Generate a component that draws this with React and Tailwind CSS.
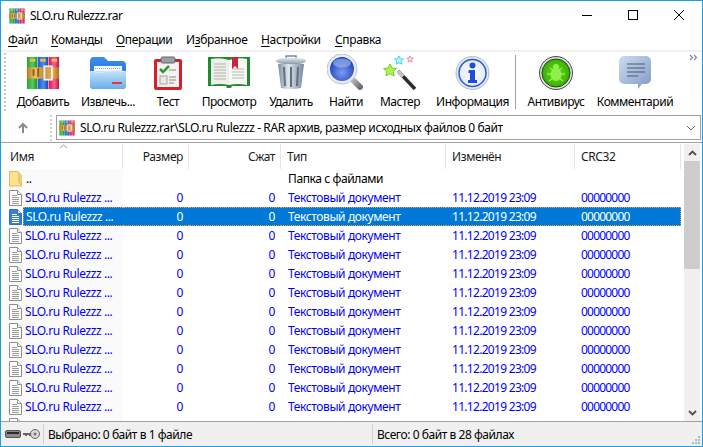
import React from "react";

const font = { fontFamily: '"Noto Sans", "Open Sans", sans-serif' };

function Rar({ size = 16 }) {
  return (
    <svg width={size} height={size} viewBox="0 0 34 36" className="shrink-0">
      <defs>
        <linearGradient id="rg" x1="0" x2="1" y1="0" y2="0"><stop offset="0" stopColor="#2aa03c" /><stop offset="0.55" stopColor="#56cc58" /><stop offset="1" stopColor="#1f8a30" /></linearGradient>
        <linearGradient id="rb" x1="0" x2="1" y1="0" y2="0"><stop offset="0" stopColor="#2358d0" /><stop offset="0.55" stopColor="#4a8cf0" /><stop offset="1" stopColor="#1c48b0" /></linearGradient>
        <linearGradient id="rr" x1="0" x2="1" y1="0" y2="0"><stop offset="0" stopColor="#d8184a" /><stop offset="0.55" stopColor="#f8608a" /><stop offset="1" stopColor="#c01040" /></linearGradient>
        <linearGradient id="rbelt" x1="0" x2="1" y1="0" y2="0"><stop offset="0" stopColor="#b87a24" /><stop offset="0.25" stopColor="#f0c060" /><stop offset="0.5" stopColor="#c89038" /><stop offset="0.8" stopColor="#e8b050" /><stop offset="1" stopColor="#b07020" /></linearGradient>
      </defs>
      <rect x="0" y="1" width="11" height="34" fill="url(#rg)" />
      <rect x="11.500" y="1" width="11" height="34" fill="url(#rb)" />
      <rect x="23" y="1" width="11" height="34" fill="url(#rr)" />
      <rect x="3" y="3" width="6" height="3" fill="#e0c050" />
      <rect x="14" y="3" width="6" height="3" fill="#e0c050" />
      <rect x="26" y="3" width="6" height="3" fill="#e0c050" />
      <rect x="0" y="12" width="34" height="12" fill="url(#rbelt)" />
      <rect x="18.500" y="11" width="8" height="14" fill="none" stroke="#f0f0f0" strokeWidth="2" />
      <rect x="6" y="14" width="2" height="7" fill="#8a5c18" />
      <rect x="11" y="13" width="2" height="9" fill="#8a5c18" />
    </svg>
  );
}

function Extract() {
  return (
    <svg width="36" height="34" viewBox="0 0 36 34">
      <defs>
        <linearGradient id="ex1" x1="0" x2="0" y1="0" y2="1"><stop offset="0" stopColor="#3a8ef0" /><stop offset="1" stopColor="#1c5fc8" /></linearGradient>
        <linearGradient id="ex2" x1="0" x2="0" y1="0" y2="1"><stop offset="0" stopColor="#c4e2fa" /><stop offset="1" stopColor="#68aeee" /></linearGradient>
      </defs>
      <path d="M0 5a4 4 0 0 1 4-4h10l4 4h14a4 4 0 0 1 4 4v20a4 4 0 0 1-4 4H4a4 4 0 0 1-4-4z" fill="url(#ex1)" />
      <rect x="4" y="10" width="28" height="9" fill="#f4f6f8" />
      <path d="M5 12.500h26" stroke="#9aa4b0" strokeDasharray="1 1" />
      <path d="M0 15h36v14a4 4 0 0 1-4 4H4a4 4 0 0 1-4-4z" fill="url(#ex2)" />
      <path d="M1 15.500q8 2 17 0t17 0" fill="none" stroke="#d8ecfc" />
      <rect x="22" y="26" width="10" height="2" fill="#e03a3a" />
    </svg>
  );
}

function Test() {
  return (
    <svg width="28" height="34" viewBox="0 0 28 34">
      <rect x="0" y="3" width="28" height="31" rx="2" fill="#d81e2c" />
      <rect x="3" y="6" width="22" height="25" fill="#f5f3ee" />
      <rect x="7" y="1" width="14" height="6" rx="1.500" fill="#9aa0a6" stroke="#5f656b" />
      <path d="M6 13l3 3 6-6" fill="none" stroke="#2d9a3c" strokeWidth="2.500" />
      <rect x="6" y="20" width="7" height="8" fill="#eceae4" stroke="#a5a5a5" />
      <path d="M15 14h7M15 21h7M15 24h7M15 27h5" stroke="#8c8c8c" />
    </svg>
  );
}

function Book() {
  return (
    <svg width="42" height="33" viewBox="0 0 42 33">
      <path d="M0 1h42v29H24l-1 2h-4l-1-2H0z" fill="#1f8a2e" />
      <path d="M3 3q9-2 18 1v25q-9-2-18 0z" fill="#eeeeea" />
      <path d="M39 3q-9-2-18 1v25q9-2 18 0z" fill="#f8f8f5" />
      <path d="M6 8h12M6 11h12M6 14h12M6 17h12M6 20h12M6 23h12M24 13h12M24 16h12M24 19h12M24 22h12" stroke="#b5b5b0" />
      <path d="M24 1h6v12l-3-3-3 3z" fill="#c8243c" />
    </svg>
  );
}

function Trash() {
  return (
    <svg width="30" height="35" viewBox="0 0 30 35">
      <defs>
        <linearGradient id="tr" x1="0" x2="1" y1="0" y2="0"><stop offset="0" stopColor="#7d8ea3" /><stop offset="0.4" stopColor="#dfe5ec" /><stop offset="1" stopColor="#77889e" /></linearGradient>
        <linearGradient id="tr2" x1="0" x2="0" y1="0" y2="1"><stop offset="0" stopColor="#e8edf2" /><stop offset="1" stopColor="#8495a8" /></linearGradient>
      </defs>
      <path d="M10 3V1h10v2" fill="none" stroke="#7a8a9c" strokeWidth="1.500" />
      <ellipse cx="15" cy="6" rx="15" ry="3.500" fill="url(#tr2)" />
      <path d="M2 9h26l-3 24q-10 2-20 0z" fill="url(#tr)" />
      <path d="M8 12l1 19M15 12v20M22 12l-1 19" stroke="#5f7085" strokeWidth="2" />
    </svg>
  );
}

function Find() {
  return (
    <svg width="38" height="37" viewBox="0 0 38 37">
      <defs>
        <radialGradient id="fd" cx="0.5" cy="0.65" r="0.6"><stop offset="0" stopColor="#7f9cf0" /><stop offset="1" stopColor="#1e40b8" /></radialGradient>
        <linearGradient id="fh" x1="0" x2="1" y1="0" y2="1"><stop offset="0" stopColor="#c8ccd0" /><stop offset="1" stopColor="#6b6f75" /></linearGradient>
      </defs>
      <path d="M24 24l9 9" stroke="url(#fh)" strokeWidth="6" strokeLinecap="round" />
      <circle cx="15" cy="15" r="15" fill="#e8eef6" stroke="#b9c4d2" />
      <circle cx="15" cy="15" r="12" fill="url(#fd)" />
      <ellipse cx="15" cy="9" rx="9" ry="4.500" fill="#a9c0f4" opacity="0.6" />
    </svg>
  );
}

function Wizard() {
  return (
    <svg width="36" height="34" viewBox="0 0 36 34">
      <path d="M16 15l17 18" stroke="#2c2c2c" strokeWidth="3.500" />
      <path d="M16 15l5 5.500" stroke="#c4c4c4" strokeWidth="3.500" />
      <path d="M8 8l2 4 4.500.5-3.300 3 1 4.500L8 17.800 3.800 20l1-4.500-3.300-3 4.500-.5z" fill="#b4f04c" stroke="#6fd03a" />
      <path d="M17 0l1.500 2.800 3 .3-2.200 2.100.7 3-3-1.500-2.800 1.500.6-3L12.500 3l3-.3z" fill="#b8f2fb" stroke="#3fd0ee" />
      <path d="M28 0l1 2 2.200.2-1.600 1.500.5 2.200-2.100-1.100-2 1.100.4-2.200L24.800 2.200 27 2z" fill="#fde0e6" stroke="#f08aa4" />
    </svg>
  );
}

function Info() {
  return (
    <svg width="35" height="34" viewBox="0 0 35 34">
      <defs><radialGradient id="inf" cx="0.5" cy="0.5" r="0.55"><stop offset="0" stopColor="#ffffff" /><stop offset="1" stopColor="#dfe7f6" /></radialGradient></defs>
      <circle cx="17.500" cy="17" r="16.500" fill="#e3e6ea" stroke="#b5bcc6" />
      <circle cx="17.500" cy="17" r="13.500" fill="url(#inf)" stroke="#2c5cc8" strokeWidth="1.500" />
      <circle cx="17.500" cy="9.500" r="3" fill="#1d4ed8" />
      <path d="M13.500 14h6.500v10h2v3h-9v-3h2v-7h-1.500z" fill="#1d4ed8" />
    </svg>
  );
}

function Bug() {
  return (
    <svg width="34" height="34" viewBox="0 0 34 34">
      <defs><radialGradient id="bg1" cx="0.5" cy="0.5" r="0.55"><stop offset="0" stopColor="#5ee01a" /><stop offset="1" stopColor="#3aa808" /></radialGradient></defs>
      <circle cx="17" cy="17" r="16.500" fill="#dcdcdc" stroke="#4a4a4a" />
      <circle cx="17" cy="17" r="14" fill="url(#bg1)" stroke="#1a4a08" />
      <ellipse cx="17" cy="18.500" rx="5.500" ry="6.500" fill="#8ff04a" />
      <circle cx="17" cy="11" r="3" fill="#8ff04a" />
      <path d="M11 12l4 3M23 12l-4 3M8 18h5M26 18h-5M10 25l4-3M24 25l-4-3" stroke="#8ff04a" strokeWidth="1.300" />
    </svg>
  );
}

function Comment() {
  return (
    <svg width="32" height="33" viewBox="0 0 32 33">
      <defs><linearGradient id="cm" x1="0" x2="1" y1="0" y2="1"><stop offset="0" stopColor="#cddcf0" /><stop offset="1" stopColor="#7f9ac4" /></linearGradient></defs>
      <path d="M5 0h22a5 5 0 0 1 5 5v18a5 5 0 0 1-5 5h-4l-4 5v-5H5a5 5 0 0 1-5-5V5a5 5 0 0 1 5-5z" fill="url(#cm)" />
      <path d="M8 8h18M8 12h18M8 16h18M8 20h11" stroke="#4a5a72" strokeWidth="1.200" />
    </svg>
  );
}

function FileIcon({ selected }) {
  const c = selected ? "#2f6fc8" : "#8e8e8e";
  return (
    <svg width="13" height="16" viewBox="0 0 13 16" className="shrink-0">
      <path d="M.5.500h8l4 4v11H.5z" fill={selected ? "#3a7fd6" : "#ffffff"} stroke={c} />
      <path d="M8.500.500v4h4" fill="#f0f0f0" stroke={c} />
      <path d="M3 5.500h5M3 7.500h7M3 9.500h7M3 11.500h7M3 13.500h7" stroke={selected ? "#ffffff" : "#9a9a9a"} />
    </svg>
  );
}

function FolderIcon() {
  return (
    <svg width="13" height="16" viewBox="0 0 13 16" className="shrink-0">
      <path d="M.5.500h8l1.500 1v9.500H12.500v4H.5z" fill="#fbe38e" stroke="#d8bb5c" />
      <path d="M10 11V2l2.500 2v11z" fill="#f3cf6a" stroke="#d8bb5c" strokeWidth="0.600" />
    </svg>
  );
}

const tools = [
  ["Добавить", "w-[68px]", <Rar size={34} />],
  ["Извлечь...", "w-[62px]", <Extract />],
  ["Тест", "w-[58px]", <Test />],
  ["Просмотр", "w-[64px]", <Book />],
  ["Удалить", "w-[60px]", <Trash />],
  ["Найти", "w-[50px]", <Find />],
  ["Мастер", "w-[58px]", <Wizard />],
  ["Информация", "w-[87px]", <Info />],
];
const tools2 = [
  ["Антивирус", "w-[80px]", <Bug />],
  ["Комментарий", "w-[78px]", <Comment />],
];

function Tool({ label, w, icon }) {
  return (
    <div className={`${w} h-[59px] shrink-0 flex flex-col items-center pt-[2px]`}>
      <div className="h-[37px] flex items-center justify-center">{icon}</div>
      <div className="mt-[2px] text-[12px] leading-[18px] whitespace-nowrap tracking-[-0.45px] text-black">{label}</div>
    </div>
  );
}

const grid = "grid grid-cols-[118px_66px_92px_165px_129px_106px]";

function Row({ selected }) {
  const t = selected ? "text-white" : "text-[#0000ff]";
  return (
    <div className={`${grid} h-[19px] text-[12px] leading-[19px] tracking-[-0.4px] whitespace-nowrap ${t}`}>
      <div className={`flex items-center pl-[4px] ${selected ? "" : "bg-[#fafafa]"}`}>
        <FileIcon selected={selected} />
        <div className={`ml-[1px] pl-[2px] flex-1 h-[19px] ${selected ? "bg-[#0078d7] border-y border-l border-dotted border-[#f0a030] leading-[17px]" : ""}`}>SLO.ru Rulezzz ...</div>
      </div>
      {[
        <div className="text-right pr-[6px]">0</div>,
        <div className="text-right pr-[6px]">0</div>,
        <div className="pl-[7px]">Текстовый документ</div>,
        <div className="pl-[6px] tracking-[-0.7px]">11.12.2019 23:09</div>,
        <div className="pl-[6px] tracking-[-0.8px]">00000000</div>,
      ].map((c, i) => (
        <div key={i} className={selected ? `bg-[#0078d7] border-y border-dotted border-[#f0a030] leading-[17px] ${i === 4 ? "border-r" : ""}` : ""}>{c}</div>
      ))}
    </div>
  );
}

function Head({ label, right, first }) {
  return (
    <div className={`h-[25px] border-r border-[#e5e5e5] text-[12px] leading-[25px] tracking-[-0.4px] text-[#1a1a1a] ${right ? "text-right pr-[5px]" : first ? "pl-[5px]" : "pl-[6px]"}`}>{label}</div>
  );
}

const U = ({ children }) => <span className="underline underline-offset-2">{children}</span>;

export default function App() {
  return (
    <div style={font} className="w-[703px] h-[447px] bg-white border border-[#18a0e8] flex flex-col overflow-hidden text-black">
      {/* Title */}
      <div className="h-[29px] shrink-0 flex items-center pl-[8px] bg-white">
        <Rar size={16} />
        <div className="ml-[5px] text-[12px] tracking-[-0.5px]">SLO.ru Rulezzz.rar</div>
        <div className="ml-auto flex items-center">
          <svg width="46" height="29" viewBox="0 0 46 29"><path d="M18 14.500h10" stroke="#000" /></svg>
          <svg width="46" height="29" viewBox="0 0 46 29"><rect x="18.500" y="9.500" width="9" height="9" fill="none" stroke="#000" /></svg>
          <svg width="46" height="29" viewBox="0 0 46 29"><path d="M18 9l10 10M28 9L18 19" stroke="#000" /></svg>
        </div>
      </div>
      {/* Menu */}
      <div className="h-[20px] shrink-0 flex items-center pl-[7px] gap-[13px] text-[12px] tracking-[-0.35px] whitespace-nowrap">
        <div className="w-[30px]"><U>Ф</U>айл</div>
        <div className="w-[52px]"><U>К</U>оманды</div>
        <div className="w-[57px]"><U>О</U>перации</div>
        <div className="w-[62px]">И<U>з</U>бранное</div>
        <div className="w-[61px]"><U>Н</U>астройки</div>
        <div><U>С</U>правка</div>
      </div>
      {/* Toolbar */}
      <div className="h-[63px] shrink-0 border-t-2 border-[#f0f0f0] flex items-start pl-[3px] relative">
        <div className="w-[2px] h-[58px] mt-[1px] border-l-2 border-dotted border-[#c8c8c8] shrink-0" />
        <div className="w-[3px] shrink-0" />
        {tools.map(([l, w, i]) => <Tool key={l} label={l} w={w} icon={i} />)}
        <div className="w-px h-[54px] mt-[3px] bg-[#a0a0a0] shrink-0 -ml-[1px]" />
        {tools2.map(([l, w, i]) => <Tool key={l} label={l} w={w} icon={i} />)}
        <svg className="absolute right-[4px] top-[2px]" width="9" height="7" viewBox="0 0 9 7">
          <path d="M1 1l2.500 2.500L1 6M5 1l2.500 2.500L5 6" fill="none" stroke="#7a8ba5" strokeWidth="1.200" />
        </svg>
      </div>
      {/* Address */}
      <div className="h-[30px] shrink-0 flex items-center pl-[4px] pr-[1px] bg-white border-b border-[#a0a0a0]">
        <div className="w-[36px] flex justify-center shrink-0">
          <svg width="12" height="12" viewBox="0 0 12 12"><path d="M6 11V2M2 6l4-4 4 4" fill="none" stroke="#8a8a8a" strokeWidth="2" /></svg>
        </div>
        <div className="ml-[9px] w-[2px] h-[26px] border-l-2 border-dotted border-[#d0d0d0] shrink-0" />
        <div className="ml-[4px] flex-1 h-[25px] border border-[#a0a0a0] flex items-center pl-[2px] pr-[4px]">
          <Rar size={16} />
          <div className="ml-[5px] text-[12px] tracking-[-0.4px] whitespace-nowrap">SLO.ru Rulezzz.rar\SLO.ru Rulezzz - RAR архив, размер исходных файлов 0 байт</div>
          <svg className="ml-auto" width="10" height="6" viewBox="0 0 10 6"><path d="M1 1l4 4 4-4" fill="none" stroke="#707070" /></svg>
        </div>
      </div>
      {/* List */}
      <div className="flex-1 min-h-0 flex pl-[4px] pr-[1px] overflow-hidden border-b border-[#a0a0a0]">
        <div className="w-[678px] shrink-0 overflow-hidden pt-[1px] relative">
          <div className={grid}>
            <Head label="Имя" first />
            <Head label="Размер" right />
            <Head label="Сжат" right />
            <Head label="Тип" />
            <Head label="Изменён" />
            <Head label="CRC32" />
          </div>
          <svg className="absolute left-[54px] top-[1px]" width="9" height="5" viewBox="0 0 9 5"><path d="M1 4l3.500-3L8 4" fill="none" stroke="#9a9a9a" /></svg>
          <div className={`${grid} h-[19px] text-[12px] leading-[19px] tracking-[-0.4px]`}>
            <div className="flex items-center pl-[4px] bg-[#fafafa]">
              <FolderIcon /><span className="ml-[4px]">..</span>
            </div>
            <div /><div />
            <div className="pl-[7px] whitespace-nowrap">Папка с файлами</div>
          </div>
          <Row />
          <Row selected />
          {Array.from({ length: 10 }).map((_, i) => <Row key={i} />)}
          <div className={`${grid} h-[19px]`}>
            <div className="flex items-center pl-[4px] bg-[#fafafa]"><FileIcon /></div>
          </div>
        </div>
        <div className="ml-[1px] w-[16px] shrink-0 bg-[#f0f0f0] flex flex-col items-center relative mt-[1px]">
          <div className="h-[17px] flex items-center justify-center">
            <svg width="9" height="6" viewBox="0 0 9 6"><path d="M1 5l3.500-3.500L8 5" fill="none" stroke="#505050" strokeWidth="1.800" /></svg>
          </div>
          <div className="w-full h-[108px] bg-[#cdcdcd]" />
          <div className="mt-auto h-[17px] flex items-center justify-center">
            <svg width="9" height="6" viewBox="0 0 9 6"><path d="M1 1l3.500 3.500L8 1" fill="none" stroke="#505050" strokeWidth="1.800" /></svg>
          </div>
        </div>
      </div>
      {/* Status */}
      <div className="h-[24px] shrink-0 bg-[#f0f0f0] flex items-center text-[12px] tracking-[-0.45px] whitespace-nowrap relative">
        <div className="ml-[4px] w-[38px] shrink-0 flex items-center gap-[2px]">
          <svg width="16" height="10" viewBox="0 0 16 10"><rect x="0.500" y="1.500" width="15" height="7" rx="1.500" fill="#8a8a8a" stroke="#555" /><rect x="2" y="3" width="12" height="2" fill="#2a2a2a" /></svg>
          <svg width="17" height="12" viewBox="0 0 17 12"><circle cx="12" cy="6" r="4.500" fill="#d8d8d8" stroke="#666" /><circle cx="12" cy="6" r="1.500" fill="#777" /><path d="M0 5h8v3H6V7H4v1H2V7H0z" fill="#666" /></svg>
        </div>
        <div className="w-px h-[20px] bg-[#d0d0d0] shrink-0" />
        <div className="ml-[4px] w-[325px] shrink-0 pt-[2px]">Выбрано: 0 байт в 1 файле</div>
        <div className="w-px h-[20px] bg-[#d0d0d0] shrink-0 -ml-[1px]" />
        <div className="ml-[4px] pt-[2px]">Всего: 0 байт в 28 файлах</div>
        <svg className="absolute right-[1px] bottom-[1px]" width="10" height="10" viewBox="0 0 10 10">
          <path d="M7 1h2v2H7zM4 4h2v2H4zM7 4h2v2H7zM1 7h2v2H1zM4 7h2v2H4zM7 7h2v2H7z" fill="#b8b8b8" />
        </svg>
      </div>
    </div>
  );
}
